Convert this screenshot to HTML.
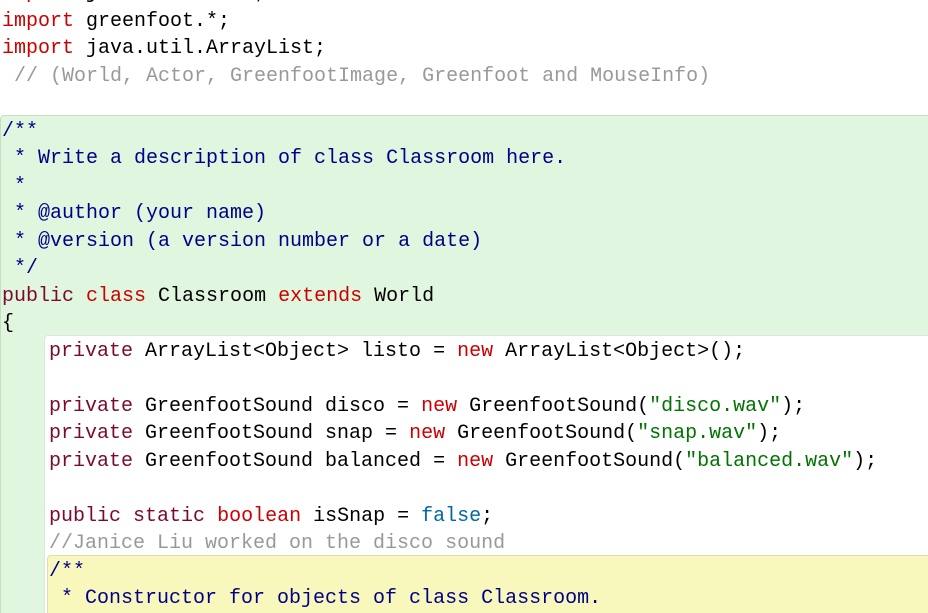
<!DOCTYPE html>
<html><head><meta charset="utf-8"><style>
html,body{margin:0;padding:0;width:928px;height:613px;overflow:hidden;background:#fff;}
body{position:relative;font-family:"Liberation Mono",monospace;font-size:20px;}
.blk{position:absolute;border-radius:4px;}
.g{left:0;top:115px;width:940px;height:520px;background:#e0f6df;border:1px solid #c6dfc4;}
.w{left:44px;top:335px;width:900px;height:300px;background:#fff;border:1px solid #dde8dc;}
.y{left:47px;top:555px;width:900px;height:80px;background:#f9f8bc;border:1px solid #e0dfa8;}
.l{position:absolute;white-space:pre;line-height:27px;height:27px;color:#000;margin-top:2px;}
.k{color:#cc0000}.m{color:#7a0a2e}.c{color:#999}.d{color:#000088}.s{color:#007300}.b{color:#0066aa}
</style></head><body>
<div class="blk g"></div><div class="blk w"></div><div class="blk y"></div>
<div class="l" style="left:2px;top:-22px"><span class="k">import</span> java.util.List;</div>
<div class="l" style="left:2px;top:6px"><span class="k">import</span> greenfoot.*;</div>
<div class="l" style="left:2px;top:33px"><span class="k">import</span> java.util.ArrayList;</div>
<div class="l c" style="left:2px;top:61px"> // (World, Actor, GreenfootImage, Greenfoot and MouseInfo)</div>
<div class="l d" style="left:2px;top:116px">/**</div>
<div class="l d" style="left:2px;top:143px"> * Write a description of class Classroom here.</div>
<div class="l d" style="left:2px;top:171px"> *</div>
<div class="l d" style="left:2px;top:198px"> * @author (your name)</div>
<div class="l d" style="left:2px;top:226px"> * @version (a version number or a date)</div>
<div class="l d" style="left:2px;top:253px"> */</div>
<div class="l" style="left:2px;top:281px"><span class="m">public</span> <span class="k">class</span> Classroom <span class="k">extends</span> World</div>
<div class="l" style="left:2px;top:308px">{</div>
<div class="l" style="left:49px;top:336px"><span class="m">private</span> ArrayList&lt;Object&gt; listo = <span class="k">new</span> ArrayList&lt;Object&gt;();</div>
<div class="l" style="left:49px;top:391px"><span class="m">private</span> GreenfootSound disco = <span class="k">new</span> GreenfootSound(<span class="s">"disco.wav"</span>);</div>
<div class="l" style="left:49px;top:418px"><span class="m">private</span> GreenfootSound snap = <span class="k">new</span> GreenfootSound(<span class="s">"snap.wav"</span>);</div>
<div class="l" style="left:49px;top:446px"><span class="m">private</span> GreenfootSound balanced = <span class="k">new</span> GreenfootSound(<span class="s">"balanced.wav"</span>);</div>
<div class="l" style="left:49px;top:501px"><span class="m">public</span> <span class="m">static</span> <span class="k">boolean</span> isSnap = <span class="b">false</span>;</div>
<div class="l c" style="left:49px;top:528px">//Janice Liu worked on the disco sound</div>
<div class="l d" style="left:49px;top:556px">/**</div>
<div class="l d" style="left:49px;top:583px"> * Constructor for objects of class Classroom.</div>
</body></html>
